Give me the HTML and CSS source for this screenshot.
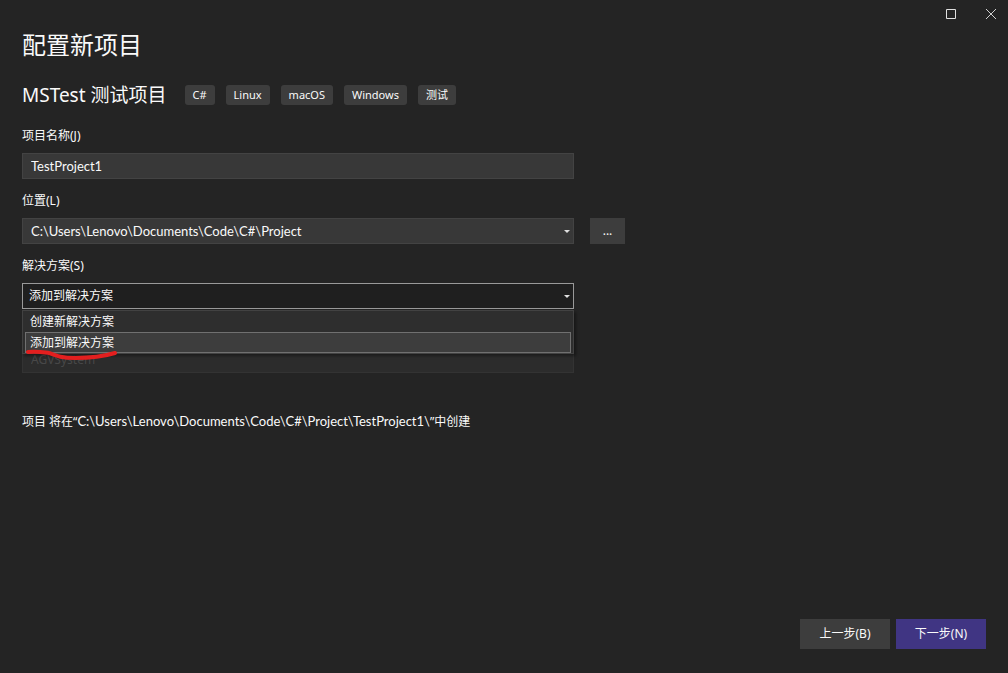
FILE: index.html
```html
<!DOCTYPE html>
<html lang="zh-CN">
<head>
<meta charset="utf-8">
<title>配置新项目</title>
<link rel="stylesheet" href="styles.css">
</head>
<body>
<div class="window">
  <header class="titlebar">
    <button class="caption-button" type="button" aria-label="最大化">
      <svg width="12" height="12" viewBox="0 0 12 12"><path d="M1.500 1.500h9v9h-9z" fill="none" stroke="#e0e0e0"/></svg>
    </button>
    <button class="caption-button" type="button" aria-label="关闭">
      <svg width="12" height="12" viewBox="0 0 12 12"><path d="M1 1l10 10M11 1L1 11" fill="none" stroke="#d0d0d0"/></svg>
    </button>
  </header>
  <main class="content">
    <h1 class="title">配置新项目</h1>
    <div class="template">
      <h2 class="template-name">MSTest 测试项目</h2>
      <ul class="tags">
        <li class="tag">C#</li>
        <li class="tag">Linux</li>
        <li class="tag">macOS</li>
        <li class="tag">Windows</li>
        <li class="tag">测试</li>
      </ul>
    </div>
    <form class="form" id="project-form">
      <div class="field">
        <label class="label" for="name">项目名称(J)</label>
        <input class="control latin" id="name" type="text" value="TestProject1">
      </div>
      <div class="field">
        <label class="label" for="location">位置(L)</label>
        <div class="location">
          <div class="combo">
            <select class="control latin" id="location"><option>C:\Users\Lenovo\Documents\Code\C#\Project</option></select>
            <svg class="arrow" width="6" height="3" viewBox="0 0 6 3"><path d="M0 0h6L3 3z" fill="#e0e0e0"/></svg>
          </div>
          <button class="browse" type="button" aria-label="浏览">...</button>
        </div>
      </div>
      <div class="field">
        <label class="label" for="solution">解决方案(S)</label>
        <div class="combo">
          <select class="control control-open" id="solution"><option>创建新解决方案</option><option selected>添加到解决方案</option></select>
          <svg class="arrow" width="6" height="3" viewBox="0 0 6 3"><path d="M0 0h6L3 3z" fill="#e0e0e0"/></svg>
          <ul class="popup" role="listbox" aria-label="解决方案">
            <li class="option" role="option" aria-selected="false">创建新解决方案</li>
            <li class="option option-active" role="option" aria-selected="true">添加到解决方案
              <svg class="underline" width="94" height="14" viewBox="0 0 94 14"><path d="M3 5C11 4 17 5 24 6C32 9 37 11 50 11C66 11 80 9 90 6" fill="none" stroke="#e31f1f" stroke-width="4" stroke-linecap="round"/></svg>
            </li>
          </ul>
        </div>
      </div>
      <div class="field">
        <input class="control control-disabled" type="text" value="AGVSystem" aria-label="解决方案名称" disabled>
      </div>
    </form>
    <p class="summary">项目 将在“<span class="latin">C:\Users\Lenovo\Documents\Code\C#\Project\TestProject1\</span>”中创建</p>
  </main>
  <footer class="footer">
    <button class="action" type="button">上一步(B)</button>
    <button class="action action-primary" type="submit" form="project-form">下一步(N)</button>
  </footer>
</div>
</body>
</html>
```
FILE: styles.css
```css
* {
  box-sizing: border-box;
}

body {
  margin: 0;
  background: #242424;
  color: #fafafa;
  font: 12px/18px "Noto Sans", "Noto Sans CJK SC", sans-serif;
}

.window {
  display: flex;
  flex-direction: column;
  min-height: 100vh;
}

button,
input,
select {
  font: inherit;
  color: inherit;
  border-radius: 0;
}

.latin {
  font-family: Lato, "Noto Sans CJK SC", sans-serif;
  font-size: 13px;
}

.titlebar {
  display: flex;
  justify-content: flex-end;
  height: 28px;
}

.caption-button {
  display: flex;
  align-items: center;
  justify-content: center;
  width: 40px;
  padding: 0 0 0 6px;
  border: 0;
  background: none;
}

.content {
  padding: 0 22px;
}

.title {
  margin: 0;
  font-size: 24px;
  line-height: 34px;
  font-weight: 400;
}

.template {
  display: flex;
  align-items: center;
  gap: 18px;
  margin: 18px 0 17px;
}

.template-name {
  margin: 0;
  font-size: 19px;
  line-height: 30px;
  font-weight: 400;
}

.tags {
  display: flex;
  gap: 11px;
  margin: 0;
  padding: 0;
  list-style: none;
}

.tag {
  padding: 0 8px;
  border-radius: 3px;
  background: #3d3d3d;
  font-size: 11px;
  line-height: 20px;
}

.form {
  display: grid;
  gap: 13px;
  max-width: 552px;
}

.field {
  display: grid;
  gap: 8px;
}

.combo {
  position: relative;
}

.control {
  appearance: none;
  display: block;
  width: 100%;
  height: 26px;
  padding: 0 8px;
  border: 1px solid #434343;
  background: #383838;
  outline: 0;
}

.control-open {
  padding: 0 6px;
  border-color: #999999;
  background: #1f1f1f;
}

.control-disabled {
  margin-top: 25px;
  padding-bottom: 2px;
  border-color: #333333;
  background: #2c2c2c;
  color: #484848;
}

.arrow {
  position: absolute;
  top: 12px;
  right: 4px;
  pointer-events: none;
}

.location {
  display: grid;
  grid-template-columns: 100% 35px;
  gap: 16px;
}

.browse {
  padding: 0;
  border: 0;
  background: #3d3d3d;
}

.popup {
  position: absolute;
  z-index: 1;
  top: 27px;
  left: 0;
  right: 0;
  margin: 0;
  padding: 0 2px;
  border: 1px solid #424242;
  background: #2e2e2e;
  box-shadow: 2px 2px 3px rgba(0, 0, 0, 0.4);
  list-style: none;
}

.option {
  position: relative;
  padding: 0 4px;
  border: 1px solid transparent;
  line-height: 19px;
}

.option-active {
  border-color: #707070;
  background: #3d3d3d;
}

.underline {
  position: absolute;
  top: 14px;
  left: -1px;
}

.summary {
  margin: 39px 0;
}

.footer {
  display: flex;
  justify-content: flex-end;
  gap: 6px;
  margin-top: auto;
  padding: 0 22px 24px;
}

.action {
  width: 90px;
  height: 30px;
  padding: 0;
  border: 0;
  background: #3d3d3d;
}

.action-primary {
  background: #403583;
}
```
